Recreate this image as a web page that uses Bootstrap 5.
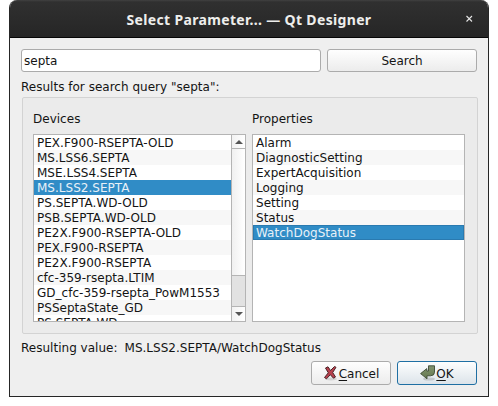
<!DOCTYPE html>
<html lang="en">
<head>
<meta charset="utf-8">
<meta name="viewport" content="width=device-width, initial-scale=1">
<title>Select Parameter</title>
<link href="https://cdn.jsdelivr.net/npm/bootstrap@5.3.0/dist/css/bootstrap.min.css" rel="stylesheet">
<style>
body { font: 12px/15px "DejaVu Sans", sans-serif; letter-spacing: .015px; color: #141414; background: #fff; overflow: hidden; }
.dialog-window { width: 480px; height: 397px; margin-left: 9px; background: #efefef; border: 1px solid #262626; border-top: 0; border-radius: 8px 8px 0 0; overflow: hidden; }
.title-bar { height: 38px; background: linear-gradient(#414141 0, #303030 2px, #262626 36px); border-bottom: 1px solid #060606; color: #eeeeec; }
.title-text { font: bold 14px/20px "Noto Sans", sans-serif; letter-spacing: .34px; padding-top: 2px; white-space: nowrap; }
.title-close { right: 14px; top: 14px; line-height: 0; }
.dialog-body { padding: 11px; }
.search-row { height: 23px; gap: 6px; }
.search-field.form-control { width: 300px; font: inherit; color: inherit; padding: 2px 2px 0 2px; min-height: 0; border: 1px solid #ababab; border-radius: 3px; }
.dlg-btn.btn { --bs-btn-padding-x: 0; --bs-btn-padding-y: 0; --bs-btn-font-size: 12px; --bs-btn-line-height: 15px; --bs-btn-color: #141414; --bs-btn-border-color: #ababab; --bs-btn-border-radius: 3px; background: linear-gradient(#fefefe, #ececec); }
.search-row .dlg-btn { padding-top: 2px; }
.btn-row { height: 24px; gap: 6px; margin-top: 5px; }
.btn-row .dlg-btn { width: 80px; }
.btn-row .dlg-btn span { padding-top: 2px; }
.dlg-btn.btn-default-ok { --bs-btn-border-color: #1f6fa3; background: linear-gradient(#fdfefe, #dce4ea); }
.dlg-btn u { text-underline-offset: 2px; text-decoration-thickness: 1px; }
.results-label { margin-top: 8px; }
.group-panel { width: 456px; height: 237px; margin: 2px 0 0 1px; padding: 14px 11px 11px 10px; gap: 6px; background: #ebebeb; border: 1px solid #d3d3d3; border-radius: 2px; }
.list-column { width: 213px; }
.list-box { height: 188px; margin-top: 7px; border: 1px solid #b4b4b4; background: #fff; overflow: hidden; }
.list-box .list-group-item { height: 15px; padding: 0 3px; border: 0; color: #141414; white-space: nowrap; background: #fff; line-height: 17px; flex-shrink: 0; }
.list-box .list-group-item:nth-child(even) { background: #f7f7f7; }
.list-box .list-group-item.active { background: #308cc6; color: #e8f1f8; margin: 0; }
.list-box .focused-item.active { box-shadow: inset 0 0 0 1px #2a7ab0; }
.scroll-bar { width: 14px; border-left: 1px solid #b4b4b4; background: #e2e2e2; }
.scroll-arrow { height: 13px; background: linear-gradient(90deg, #f2f2f2, #fff); }
.scroll-arrow-down { height: 15px; border-top: 1px solid #b4b4b4; }
.scroll-thumb { height: 128px; background: linear-gradient(90deg, #f0f0f0, #fff); border: solid #b4b4b4; border-width: 1px 0; }
.result-row { gap: 7px; margin-top: 7px; }
</style>
</head>
<body>
<main class="dialog-window">
  <header class="title-bar position-relative d-flex align-items-center justify-content-center">
    <span class="title-text">Select Parameter... — Qt Designer</span>
    <span class="title-close position-absolute"><svg width="9" height="9" viewBox="0 0 9 9"><path d="M1.5 2 7 7.5M7 2 1.5 7.5" stroke="#e4e4e4" stroke-width="1.1"/></svg></span>
  </header>
  <div class="dialog-body">
    <div class="search-row d-flex">
      <input class="search-field form-control" type="text" value="septa" aria-label="Search query">
      <button class="dlg-btn btn flex-grow-1" type="button">Search</button>
    </div>
    <div class="results-label">Results for search query "septa":</div>
    <section class="group-panel d-flex">
      <div class="list-column">
        <div>Devices</div>
        <div class="list-box d-flex">
          <div class="list-group rounded-0 flex-grow-1">
            <div class="list-group-item">PEX.F900-RSEPTA-OLD</div>
            <div class="list-group-item">MS.LSS6.SEPTA</div>
            <div class="list-group-item">MSE.LSS4.SEPTA</div>
            <div class="list-group-item active">MS.LSS2.SEPTA</div>
            <div class="list-group-item">PS.SEPTA.WD-OLD</div>
            <div class="list-group-item">PSB.SEPTA.WD-OLD</div>
            <div class="list-group-item">PE2X.F900-RSEPTA-OLD</div>
            <div class="list-group-item">PEX.F900-RSEPTA</div>
            <div class="list-group-item">PE2X.F900-RSEPTA</div>
            <div class="list-group-item">cfc-359-rsepta.LTIM</div>
            <div class="list-group-item">GD_cfc-359-rsepta_PowM1553</div>
            <div class="list-group-item">PSSeptaState_GD</div>
            <div class="list-group-item">PS.SEPTA.WD</div>
          </div>
          <div class="scroll-bar d-flex flex-column flex-shrink-0">
            <div class="scroll-arrow d-flex align-items-center justify-content-center"><svg width="8" height="4" viewBox="0 0 8 4"><path d="M0 4 4 0 8 4Z" fill="#555"/></svg></div>
            <div class="scroll-thumb"></div>
            <div class="scroll-arrow scroll-arrow-down mt-auto d-flex align-items-center justify-content-center"><svg width="8" height="4" viewBox="0 0 8 4"><path d="M0 0H8L4 4Z" fill="#555"/></svg></div>
          </div>
        </div>
      </div>
      <div class="list-column">
        <div>Properties</div>
        <div class="list-box">
          <div class="list-group rounded-0">
            <div class="list-group-item">Alarm</div>
            <div class="list-group-item">DiagnosticSetting</div>
            <div class="list-group-item">ExpertAcquisition</div>
            <div class="list-group-item">Logging</div>
            <div class="list-group-item">Setting</div>
            <div class="list-group-item">Status</div>
            <div class="list-group-item active focused-item">WatchDogStatus</div>
          </div>
        </div>
      </div>
    </section>
    <div class="result-row d-flex"><span>Resulting value:</span><span>MS.LSS2.SEPTA/WatchDogStatus</span></div>
    <div class="btn-row d-flex justify-content-end">
      <button class="dlg-btn btn d-flex align-items-center justify-content-center" type="button">
        <svg width="16" height="16" viewBox="0 0 16 16"><ellipse cx="8" cy="14" rx="6" ry="1.4" fill="#000" opacity=".12"/><path d="M2.5 3 5 1.8 7.5 5.5 11.5 1.5 13 2.3 9.7 7.5 12.5 12 10.5 13.2 7.3 9.7 3.5 13.8 1.5 12.5 5.3 7.8Z" fill="#b8404d" stroke="#4b2529" stroke-width="1" stroke-linejoin="round"/></svg><span><u>C</u>ancel</span>
      </button>
      <button class="dlg-btn btn btn-default-ok d-flex align-items-center justify-content-center" type="button">
        <svg width="16" height="16" viewBox="0 0 16 16"><defs><linearGradient id="arrowFill" x2="0" y2="1"><stop stop-color="#82946f"/><stop offset="1" stop-color="#64784f"/></linearGradient></defs><ellipse cx="9" cy="14" rx="6" ry="1.6" fill="#000" opacity=".15"/><path d="M8.5 .8H14.5V7.2Q14.5 10.7 10.5 10.8H7V13.8L.6 8.6 6.8 3.6V6H8.5Z" fill="url(#arrowFill)" stroke="#3d4a34" stroke-width=".9" stroke-linejoin="round"/></svg><span><u>O</u>K</span>
      </button>
    </div>
  </div>
</main>
<script src="https://cdn.jsdelivr.net/npm/bootstrap@5.3.0/dist/js/bootstrap.bundle.min.js"></script>
</body>
</html>
